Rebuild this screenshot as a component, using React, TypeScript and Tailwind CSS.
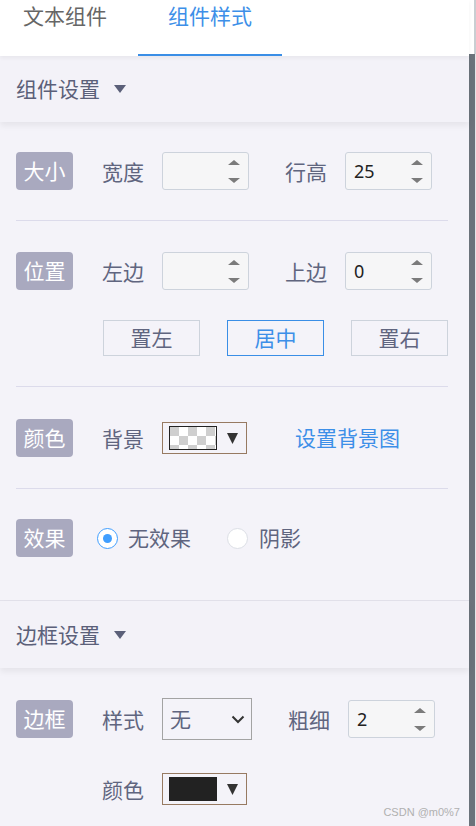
import React from "react";

const cjk = "font-['Noto_Sans_CJK_SC','Noto_Sans',sans-serif]";

function Spinner() {
  return (
    <div className="flex flex-col gap-[13px]">
      <svg width="12" height="5" viewBox="0 0 12 5"><path d="M6 0L12 5H0z" fill="#7b7b7b" /></svg>
      <svg width="12" height="5" viewBox="0 0 12 5"><path d="M0 0h12L6 5z" fill="#7b7b7b" /></svg>
    </div>
  );
}

function NumInput({ value }: { value?: string }) {
  return (
    <div className="flex h-[38px] w-[87px] items-center justify-between rounded-[3px] border border-[#cdd3dc] bg-[#f6f6f7] pl-[8px] pr-[8px]">
      <span className="font-['Noto_Sans',sans-serif] text-[18px] text-[#222]">{value}</span>
      <Spinner />
    </div>
  );
}

function Badge({ text }: { text: string }) {
  return (
    <span className="flex h-[38px] w-[57px] items-center justify-center rounded-[4px] bg-[#a9a9bf] text-[21px] text-white">
      {text}
    </span>
  );
}

function Label({ text, className = "" }: { text: string; className?: string }) {
  return <span className={"w-[60px] text-[21px] leading-[38px] text-[#60657f] " + className}>{text}</span>;
}

function ColorPicker({ checker }: { checker?: boolean }) {
  return (
    <div className="flex h-[32px] w-[85px] items-center border border-[#977a62] pl-[6px]">
      <div className="h-[24px] w-[48px] border border-[#222] bg-[#222]">
        {checker && (
          <svg width="46" height="22" viewBox="0 0 46 22">
            <defs>
              <pattern id="chk" width="18" height="18" patternUnits="userSpaceOnUse">
                <rect width="18" height="18" fill="#fff" />
                <rect width="9" height="9" fill="#cfcfcf" />
                <rect x="9" y="9" width="9" height="9" fill="#cfcfcf" />
              </pattern>
            </defs>
            <rect width="46" height="22" fill="url(#chk)" />
          </svg>
        )}
      </div>
      <svg className="ml-[10px]" width="11" height="11" viewBox="0 0 11 11"><path d="M0 0h11L5.5 11z" fill="#333" /></svg>
    </div>
  );
}

function SectionHeader({ title, tall }: { title: string; tall?: boolean }) {
  return (
    <div className={(tall ? "h-[67px] " : "h-[66px] ") + "relative z-10 flex items-center bg-[#f3f2f8] pl-4 shadow-[0_4px_6px_rgba(0,0,0,0.06)]"}>
      <span className="text-[21px] text-[#5b6079]">{title}</span>
      <svg className="ml-[14px]" width="12" height="8" viewBox="0 0 12 8"><path d="M0 0h12L6 8z" fill="#5b6079" /></svg>
    </div>
  );
}

export default function App() {
  return (
    <div className={"relative flex h-[826px] w-[476px] overflow-hidden bg-[#f4f3f9] " + cjk}>
      <div className="flex w-[469px] flex-col">
        <div className="relative z-20 flex h-[56px] bg-white shadow-[0_2px_4px_rgba(0,0,0,0.05)]">
          <div className="w-[138px] pl-[23px] text-[21px] leading-[30px] text-[#666]">文本组件</div>
          <div className="w-[144px] border-b-2 border-[#3a8ee6] text-center text-[21px] leading-[30px] text-[#3d8fe8]">组件样式</div>
          <div className="flex-1" />
        </div>

        <SectionHeader title="组件设置" />

        <div className="pl-4 pr-[21px]">
          <div className="border-b border-[#dcdbeb] pb-[30px] pt-[30px]">
            <div className="flex items-center">
              <Badge text="大小" />
              <Label text="宽度" className="ml-[29px]" />
              <NumInput />
              <Label text="行高" className="ml-[36px]" />
              <NumInput value="25" />
            </div>
          </div>

          <div className="border-b border-[#dcdbeb] pb-[30px] pt-[31px]">
            <div className="flex items-center">
              <Badge text="位置" />
              <Label text="左边" className="ml-[29px]" />
              <NumInput />
              <Label text="上边" className="ml-[36px]" />
              <NumInput value="0" />
            </div>
            <div className="ml-[87px] mt-[30px] flex gap-[27px]">
              <button className="h-[36px] w-[97px] border border-[#cdd3dc] text-[21px] text-[#60657f]">置左</button>
              <button className="h-[36px] w-[97px] border border-[#3a8ee6] text-[21px] text-[#3d8fe8]">居中</button>
              <button className="h-[36px] w-[97px] border border-[#cdd3dc] text-[21px] text-[#60657f]">置右</button>
            </div>
          </div>

          <div className="border-b border-[#dcdbeb] pb-[31px] pt-[32px]">
            <div className="flex items-center">
              <Badge text="颜色" />
              <Label text="背景" className="ml-[29px]" />
              <ColorPicker checker />
              <span className="ml-[48px] text-[21px] text-[#3d8fe8]">设置背景图</span>
            </div>
          </div>

          <div className="pb-[43px] pt-[30px]">
            <div className="flex items-center">
              <Badge text="效果" />
              <span className="ml-[24px] flex h-[21px] w-[21px] items-center justify-center rounded-full border border-[#409eff] bg-white">
                <span className="h-[9px] w-[9px] rounded-full bg-[#409eff]" />
              </span>
              <span className="ml-[10px] text-[21px] text-[#60657f]">无效果</span>
              <span className="ml-[36px] h-[21px] w-[21px] rounded-full border border-[#dcdfe6] bg-white" />
              <span className="ml-[11px] text-[21px] text-[#60657f]">阴影</span>
            </div>
          </div>
        </div>

        <div className="border-t border-[#e2e1ea]">
          <SectionHeader title="边框设置" tall />
          <div className="pl-4 pr-[21px] pt-[30px]">
            <div className="flex items-center">
              <Badge text="边框" />
              <Label text="样式" className="ml-[29px]" />
              <div className="flex h-[42px] w-[90px] items-center justify-between border border-[#a3a3a3] pl-[7px] pr-[6px]">
                <span className="text-[21px] text-[#60657f]">无</span>
                <svg width="14" height="9" viewBox="0 0 14 9"><path d="M1.5 1.5L7 7l5.5-5.5" fill="none" stroke="#333" strokeWidth="2" /></svg>
              </div>
              <Label text="粗细" className="ml-[36px]" />
              <NumInput value="2" />
            </div>
            <div className="mt-[30px] flex items-center">
              <Label text="颜色" className="ml-[86px]" />
              <ColorPicker />
            </div>
          </div>
        </div>
      </div>

      <div className="flex w-[7px] flex-col">
        <div className="h-[54px] border-r-2 border-[#c9ced2] bg-white" />
        <div className="flex flex-1">
          <div className="w-[6px] bg-[#6b737b]" />
          <div className="w-[1px] bg-[#e4e5e8]" />
        </div>
      </div>

      <span className="absolute bottom-[6px] right-[16px] font-['Liberation_Sans',sans-serif] text-[11px] text-[#b0b0b0]">CSDN @m0%7</span>
    </div>
  );
}
